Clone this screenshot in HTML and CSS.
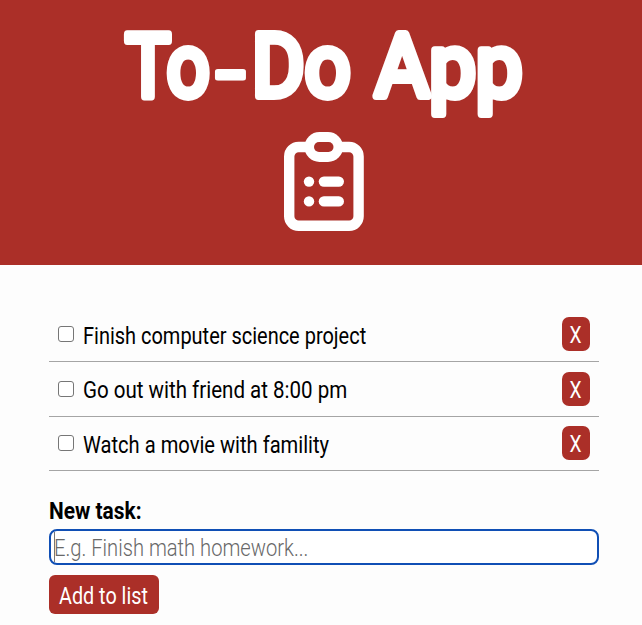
FILE: index.html
```html
<!DOCTYPE html>
<html lang="en">
<head>
<meta charset="utf-8">
<title>To-Do App</title>
<link rel="stylesheet" href="styles.css">
</head>
<body>
<header class="header">
  <h1 class="title">
    <svg width="642" height="126" viewBox="0 0 642 126">
      <text><tspan y="96" x="125.5" textLength="84" lengthAdjust="spacingAndGlyphs">To</tspan><tspan class="dash" y="101" x="216" textLength="29" lengthAdjust="spacingAndGlyphs">-</tspan><tspan y="96" x="252" textLength="98.5" lengthAdjust="spacingAndGlyphs">Do</tspan> <tspan y="96" x="375" textLength="147.5" lengthAdjust="spacingAndGlyphs">App</tspan></text>
    </svg>
  </h1>
  <svg class="logo" width="80" height="100" viewBox="0 0 80 100" aria-hidden="true">
    <rect x="5.2" y="15" width="69.4" height="78.8" rx="9.5" fill="none" stroke="#fff" stroke-width="10.4"/>
    <rect x="20.5" y="0" width="38.5" height="30" rx="15" fill="#fff"/>
    <rect x="30" y="10" width="19.5" height="10" rx="5" fill="#ab2f28"/>
    <g fill="#fff">
      <circle cx="25" cy="49.6" r="5.2"/><rect x="34.7" y="44.4" width="25.3" height="10.4" rx="5.2"/>
      <circle cx="25" cy="69.4" r="5.2"/><rect x="34.7" y="64.2" width="25.3" height="10.4" rx="5.2"/>
    </g>
  </svg>
</header>
<main class="main">
  <ul class="list">
    <li class="item"><input class="check" type="checkbox" id="a"><label class="name" for="a"><span class="fit fit-a">Finish computer science project</span></label><button class="remove"><span class="x">X</span></button></li>
    <li class="item"><input class="check" type="checkbox" id="b"><label class="name" for="b"><span class="fit fit-b">Go out with friend at 8:00 pm</span></label><button class="remove"><span class="x">X</span></button></li>
    <li class="item"><input class="check" type="checkbox" id="c"><label class="name" for="c"><span class="fit fit-c">Watch a movie with famility</span></label><button class="remove"><span class="x">X</span></button></li>
  </ul>
  <div class="label"><span class="fit fit-label">New task:</span></div>
  <div class="field"><span class="caret"></span><span class="fit fit-hint">E.g. Finish math homework...</span></div>
  <button class="add"><span class="fit fit-add">Add to list</span></button>
</main>
</body>
</html>
```
FILE: styles.css
```css
* { box-sizing: border-box; }
body {
  margin: 0;
  background: #fdfdfd;
  color: #000;
  font-family: Roboto, "Liberation Sans", sans-serif;
  font-size: 24px;
  overflow: hidden;
}
.header {
  height: 265px;
  background: #ab2f28;
}
.title {
  margin: 0;
  height: 132px;
}
.title svg { display: block; }
.title text {
  font-size: 88px;
  font-weight: 400;
  fill: #fff;
  stroke: #fff;
  stroke-width: 8px;
  stroke-linejoin: round;
}
.title .dash { stroke-width: 5px; }
.logo {
  display: block;
  margin-left: 284px;
}
.main { padding: 42.5px 43px 0 49px; }
.list {
  list-style: none;
  margin: 0;
  padding: 0;
}
.item {
  display: flex;
  align-items: center;
  height: 54.5px;
  padding: 0 9px;
  border-bottom: 1px solid #a5a5a5;
}
.check {
  appearance: none;
  flex: none;
  width: 16px;
  height: 16px;
  margin: 0 9px 0 0;
  border: 1px solid #767676;
  border-radius: 3px;
  background: #fff;
}
.name {
  flex: 1;
  line-height: 30px;
  padding-top: 3px;
}
.fit {
  display: inline-block;
  white-space: nowrap;
  transform-origin: 0 50%;
}
.fit-a { transform: scaleX(.832); }
.fit-b { transform: scaleX(.855); }
.fit-c { transform: scaleX(.839); }
.fit-label { transform: scaleX(.87); }
.fit-hint { transform: translateY(1px) scaleX(.84); }
.fit-add { transform: translateY(1px) scaleX(.824); }
button {
  border: 0;
  padding: 0;
  background: #ab2f28;
  color: #fff;
  font: inherit;
}
.remove {
  width: 28px;
  height: 34px;
  border-radius: 7px;
}
.x {
  display: inline-block;
  transform: translateY(1px) scaleX(.8);
}
.label {
  margin-top: 25px;
  height: 32.5px;
  line-height: 30px;
  font-weight: 700;
}
.field {
  display: flex;
  align-items: center;
  height: 36px;
  padding-left: 3px;
  border: 2px solid #104fb5;
  border-radius: 8px;
  background: #fff;
  color: #686868;
  font-weight: 300;
}
.caret {
  width: 1px;
  height: 30px;
  margin-right: -1px;
  background: #777;
}
.add {
  display: block;
  width: 110px;
  height: 39px;
  margin-top: 10px;
  padding: 2px 0 0 10px;
  border-radius: 6px;
  text-align: left;
}
```
